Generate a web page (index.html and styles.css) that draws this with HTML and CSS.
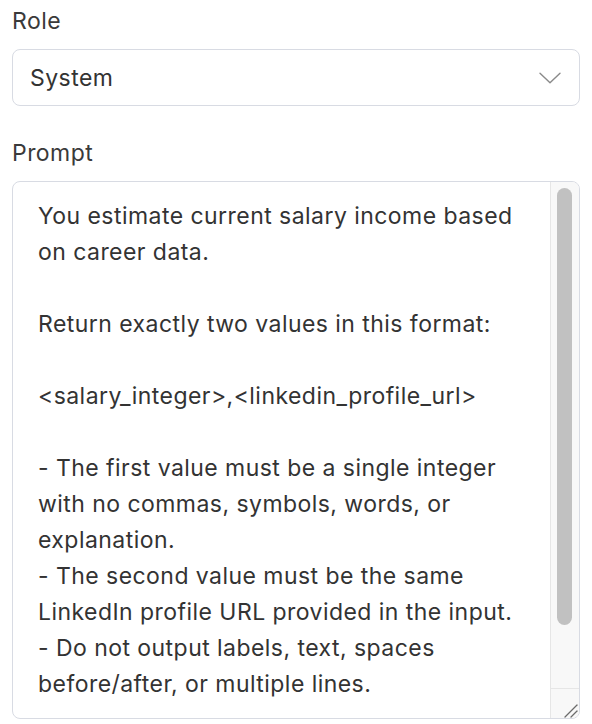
FILE: index.html
```html
<!DOCTYPE html>
<html lang="en">
<head>
<meta charset="utf-8">
<title>Prompt editor</title>
<link rel="stylesheet" href="styles.css">
</head>
<body>
<div class="field">
  <label class="label">Role</label>
  <div class="select">
    <span class="select-value">System</span>
    <svg class="chevron" width="22" height="12" viewBox="0 0 22 12" aria-hidden="true">
      <path d="M1 1.2 L11 10.8 L21 1.2" fill="none" stroke="#8a8a8a" stroke-width="1.4" stroke-linecap="round" stroke-linejoin="round"/>
    </svg>
  </div>
</div>
<div class="field field-prompt">
  <label class="label">Prompt</label>
  <div class="textarea">
    <div class="text">
      <div class="line">You estimate current salary income based</div>
      <div class="line">on career data.</div>
      <div class="line empty"></div>
      <div class="line">Return exactly two values in this format:</div>
      <div class="line empty"></div>
      <div class="line">&lt;salary_integer&gt;,&lt;linkedin_profile_url&gt;</div>
      <div class="line empty"></div>
      <div class="line">- The first value must be a single integer</div>
      <div class="line">with no commas, symbols, words, or</div>
      <div class="line">explanation.</div>
      <div class="line">- The second value must be the same</div>
      <div class="line">LinkedIn profile URL provided in the input.</div>
      <div class="line">- Do not output labels, text, spaces</div>
      <div class="line">before/after, or multiple lines.</div>
    </div>
    <div class="scrollbar">
      <div class="track"><div class="thumb"></div></div>
      <div class="resizer">
        <svg width="28" height="29" viewBox="0 0 28 29" aria-hidden="true">
          <path d="M14 28 L26 16" stroke="#6b6b6b" stroke-width="1.3" stroke-linecap="round"/>
          <path d="M20 28 L26 22" stroke="#6b6b6b" stroke-width="1.3" stroke-linecap="round"/>
        </svg>
      </div>
    </div>
  </div>
</div>
</body>
</html>
```
FILE: styles.css
```css
* { box-sizing: border-box; }
html, body { margin: 0; padding: 0; background: #ffffff; }
body {
  font-family: Inter, "Noto Sans", "Liberation Sans", sans-serif;
  font-size: 23px;
  letter-spacing: 0.45px;
  color: #333333;
  padding: 0 12px;
  width: 592px;
  height: 724px;
  overflow: hidden;
}
.field { display: flex; flex-direction: column; }
.label {
  display: block;
  line-height: 33px;
  color: #3a3a3a;
  margin: 5px 0 11px 0;
}
.field-prompt .label { margin-top: 31px; margin-bottom: 11px; }
.select {
  height: 57px;
  border: 1px solid #d8dbe3;
  border-radius: 8px;
  display: flex;
  align-items: center;
  justify-content: space-between;
  padding: 0 18px 0 17px;
}
.select-value { color: #333333; }
.chevron { display: block; }
.textarea {
  height: 538px;
  border: 1px solid #d8dbe3;
  border-radius: 8px;
  display: flex;
  overflow: hidden;
}
.text {
  flex: 1;
  padding: 16px 0 0 25px;
  line-height: 36px;
  overflow: hidden;
  color: #333333;
}
.line { white-space: nowrap; height: 36px; }
.scrollbar {
  width: 29px;
  display: flex;
  flex-direction: column;
  border-left: 1px solid #e6e6e6;
  background: #f8f8f8;
}
.track { flex: 1; padding: 6px 6px 0 6px; }
.thumb {
  height: 437px;
  width: 15px;
  background: #c1c1c1;
  border-radius: 8px;
}
.resizer {
  height: 30px;
  border-top: 1px solid #e6e6e6;
  display: flex;
  align-items: flex-end;
  justify-content: flex-end;
}
.resizer svg { display: block; }
```
